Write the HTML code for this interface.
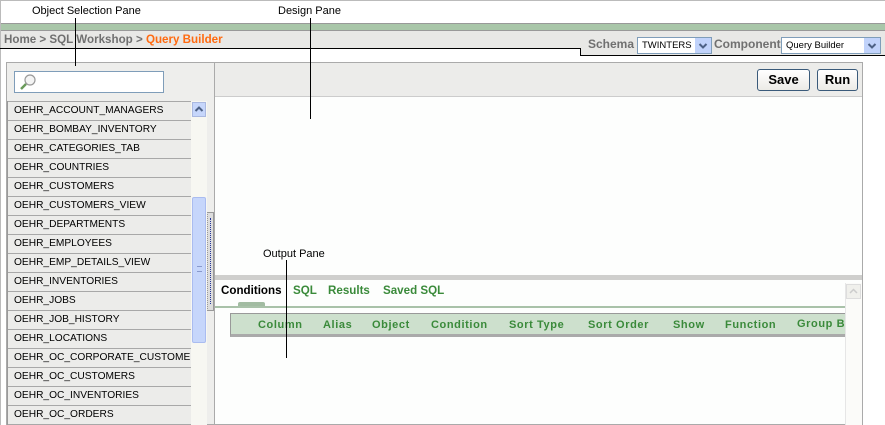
<!DOCTYPE html>
<html><head><meta charset="utf-8"><style>
*{margin:0;padding:0;box-sizing:border-box}
body{width:885px;height:425px;overflow:hidden;background:#fff;font-family:"Liberation Sans",Arial,sans-serif;position:relative}
.a{position:absolute}
.t{font-size:11px;color:#000;white-space:nowrap}
.row{position:absolute;left:8px;width:183px;height:19px;border-bottom:1px solid #a8a8a8;background:#ececea;font-size:10.2px;line-height:18px;padding-left:6px;white-space:nowrap;overflow:hidden}
.tab{position:absolute;top:284px;font-size:11.6px;font-weight:bold;color:#3a8a3a}
.hd{position:absolute;top:319px;font-size:11px;font-weight:bold;color:#3a8a3a;letter-spacing:0.6px;white-space:nowrap}
.btn{position:absolute;top:69px;height:22px;border:1px solid #3a5a7a;border-radius:3px;background:linear-gradient(#fff,#ecebe6);font-size:13px;font-weight:bold;text-align:center;line-height:20px}
.ln{position:absolute;width:1px;background:#000}
.dd{position:absolute;top:38px;width:16px;height:15px;background:#c1d3fb}
</style></head><body>
<div class="a" style="left:0;top:0;width:885px;height:425px;border-left:1px solid #bbb;border-top:1px solid #bbb"></div>
<div class="a t" style="left:32px;top:5px">Object Selection Pane</div>
<div class="a t" style="left:278px;top:5px">Design Pane</div>
<div class="a" style="left:1px;top:23px;width:884px;height:8px;background:#a9c6a9;border-top:1px solid #999;border-bottom:1px solid #999"></div>
<div class="a" style="left:1px;top:31px;width:884px;height:18px;background:#e8e8e6"></div>
<div class="a" style="left:580px;top:49px;width:305px;height:7px;background:#e8e8e6"></div>
<div class="a" style="left:0;top:48px;width:581px;height:1px;background:#000"></div>
<div class="a" style="left:580px;top:48px;width:1px;height:8px;background:#000"></div>
<div class="a" style="left:580px;top:55px;width:305px;height:1px;background:#000"></div>
<div class="a" style="left:4px;top:33px;font-size:11.6px;font-weight:bold;color:#707070;white-space:nowrap">Home &gt; SQL Workshop &gt; <span style="color:#ff6a10">Query Builder</span></div>
<div class="a" style="left:588px;top:37px;font-size:12px;font-weight:bold;color:#707070">Schema</div>
<div class="a" style="left:637px;top:37px;width:75px;height:17px;border:1px solid #7f9db9;background:#fff;font-size:9.5px;line-height:15px;padding-left:4px">TWINTERS</div>
<div class="dd" style="left:695px"><svg width="16" height="15"><path d="M4.5 6 L8 9.5 L11.5 6" fill="none" stroke="#4d6185" stroke-width="2"/></svg></div>
<div class="a" style="left:714px;top:37px;font-size:12px;font-weight:bold;color:#707070">Component</div>
<div class="a" style="left:781px;top:37px;width:100px;height:17px;border:1px solid #7f9db9;background:#fff;font-size:9.5px;line-height:15px;padding-left:4px">Query Builder</div>
<div class="dd" style="left:864px"><svg width="16" height="15"><path d="M4.5 6 L8 9.5 L11.5 6" fill="none" stroke="#4d6185" stroke-width="2"/></svg></div>
<div class="a" style="left:6px;top:62px;width:209px;height:363px;background:#eeeeec;border:1px solid #aaa"></div>
<div class="a" style="left:14px;top:71px;width:150px;height:22px;border:1px solid #7f9db9;background:#fff"></div>
<svg class="a" style="left:19px;top:73px" width="18" height="18"><circle cx="11" cy="7" r="5" fill="#f4f4f4" stroke="#999" stroke-width="1.2"/><line x1="7" y1="11" x2="2" y2="16" stroke="#6a9a5a" stroke-width="2.5"/></svg>
<div class="a" style="left:7px;top:101px;width:184px;height:1px;background:#a8a8a8"></div>
<div class="a" style="left:7px;top:101px;width:1px;height:324px;background:#999"></div>
<div class="row" style="top:102px">OEHR_ACCOUNT_MANAGERS</div>
<div class="row" style="top:121px">OEHR_BOMBAY_INVENTORY</div>
<div class="row" style="top:140px">OEHR_CATEGORIES_TAB</div>
<div class="row" style="top:159px">OEHR_COUNTRIES</div>
<div class="row" style="top:178px">OEHR_CUSTOMERS</div>
<div class="row" style="top:197px">OEHR_CUSTOMERS_VIEW</div>
<div class="row" style="top:216px">OEHR_DEPARTMENTS</div>
<div class="row" style="top:235px">OEHR_EMPLOYEES</div>
<div class="row" style="top:254px">OEHR_EMP_DETAILS_VIEW</div>
<div class="row" style="top:273px">OEHR_INVENTORIES</div>
<div class="row" style="top:292px">OEHR_JOBS</div>
<div class="row" style="top:311px">OEHR_JOB_HISTORY</div>
<div class="row" style="top:330px">OEHR_LOCATIONS</div>
<div class="row" style="top:349px">OEHR_OC_CORPORATE_CUSTOMERS</div>
<div class="row" style="top:368px">OEHR_OC_CUSTOMERS</div>
<div class="row" style="top:387px">OEHR_OC_INVENTORIES</div>
<div class="row" style="top:406px">OEHR_OC_ORDERS</div>
<div class="a" style="left:191px;top:101px;width:16px;height:324px;background:#f7f7f2"></div>
<div class="a" style="left:192px;top:102px;width:14px;height:15px;background:#c6d6fb;border:1px solid #aab8e0"><svg width="12" height="13"><path d="M2.5 8 L6 4.5 L9.5 8" fill="none" stroke="#4d6185" stroke-width="2"/></svg></div>
<div class="a" style="left:192px;top:197px;width:14px;height:146px;background:#c6d6fb;border:1px solid #aabcf0;border-radius:2px"></div>
<div class="a" style="left:197px;top:266px;width:5px;height:6px;border-top:1px solid #8899cc;border-bottom:1px solid #8899cc"></div>
<div class="a" style="left:207px;top:212px;width:7px;height:99px;background:#ddd;border:1px solid #999;border-left-style:dotted"></div>
<div class="a" style="left:210px;top:218px;width:1px;height:86px;border-left:1px dotted #223399"></div>
<div class="a" style="left:214px;top:62px;width:649px;height:363px;border:1px solid #aaa;background:#fdfefd"></div>
<div class="a" style="left:215px;top:63px;width:647px;height:34px;background:#ececea;border-bottom:1px solid #ccc"></div>
<div class="btn" style="left:757px;width:53px">Save</div>
<div class="btn" style="left:817px;width:41px">Run</div>
<div class="a" style="left:215px;top:275px;width:647px;height:5px;background:#cfcfcd"></div>
<div class="tab" style="left:221px;color:#000">Conditions</div>
<div class="tab" style="left:293px">SQL</div>
<div class="tab" style="left:328px">Results</div>
<div class="tab" style="left:383px">Saved SQL</div>
<div class="a" style="left:238px;top:302px;width:27px;height:4px;background:#a2bca2;border-radius:2px 2px 0 0"></div>
<div class="a" style="left:215px;top:306px;width:630px;height:2px;background:#a9c2a9"></div>
<div class="a" style="left:230px;top:313px;width:615px;height:24px;background:#cde0cd;border:1px solid #999;border-bottom:3px solid #aaa;border-right:none"></div>
<div class="hd" style="left:258px">Column</div>
<div class="hd" style="left:323px">Alias</div>
<div class="hd" style="left:372px">Object</div>
<div class="hd" style="left:431px">Condition</div>
<div class="hd" style="left:509px">Sort Type</div>
<div class="hd" style="left:588px">Sort Order</div>
<div class="hd" style="left:673px">Show</div>
<div class="hd" style="left:725px">Function</div>
<div class="a" style="left:797px;top:313px;width:48px;height:24px;overflow:hidden"><div class="hd" style="left:0;top:5px">Group By</div></div>
<div class="a" style="left:845px;top:283px;width:17px;height:142px;background:#fbfbf9;border-left:1px solid #e6e6e6"></div>
<div class="a" style="left:846px;top:284px;width:15px;height:15px;background:#f0f0ec;border:1px solid #ddd"><svg width="13" height="13"><path d="M3 8 L6.5 4.5 L10 8" fill="none" stroke="#ccc" stroke-width="1.5"/></svg></div>
<div class="ln" style="left:75px;top:18px;height:48px"></div>
<div class="ln" style="left:310px;top:18px;height:101px"></div>
<div class="a t" style="left:263px;top:248px">Output Pane</div>
<div class="ln" style="left:286px;top:260px;height:98px"></div>
</body></html>
